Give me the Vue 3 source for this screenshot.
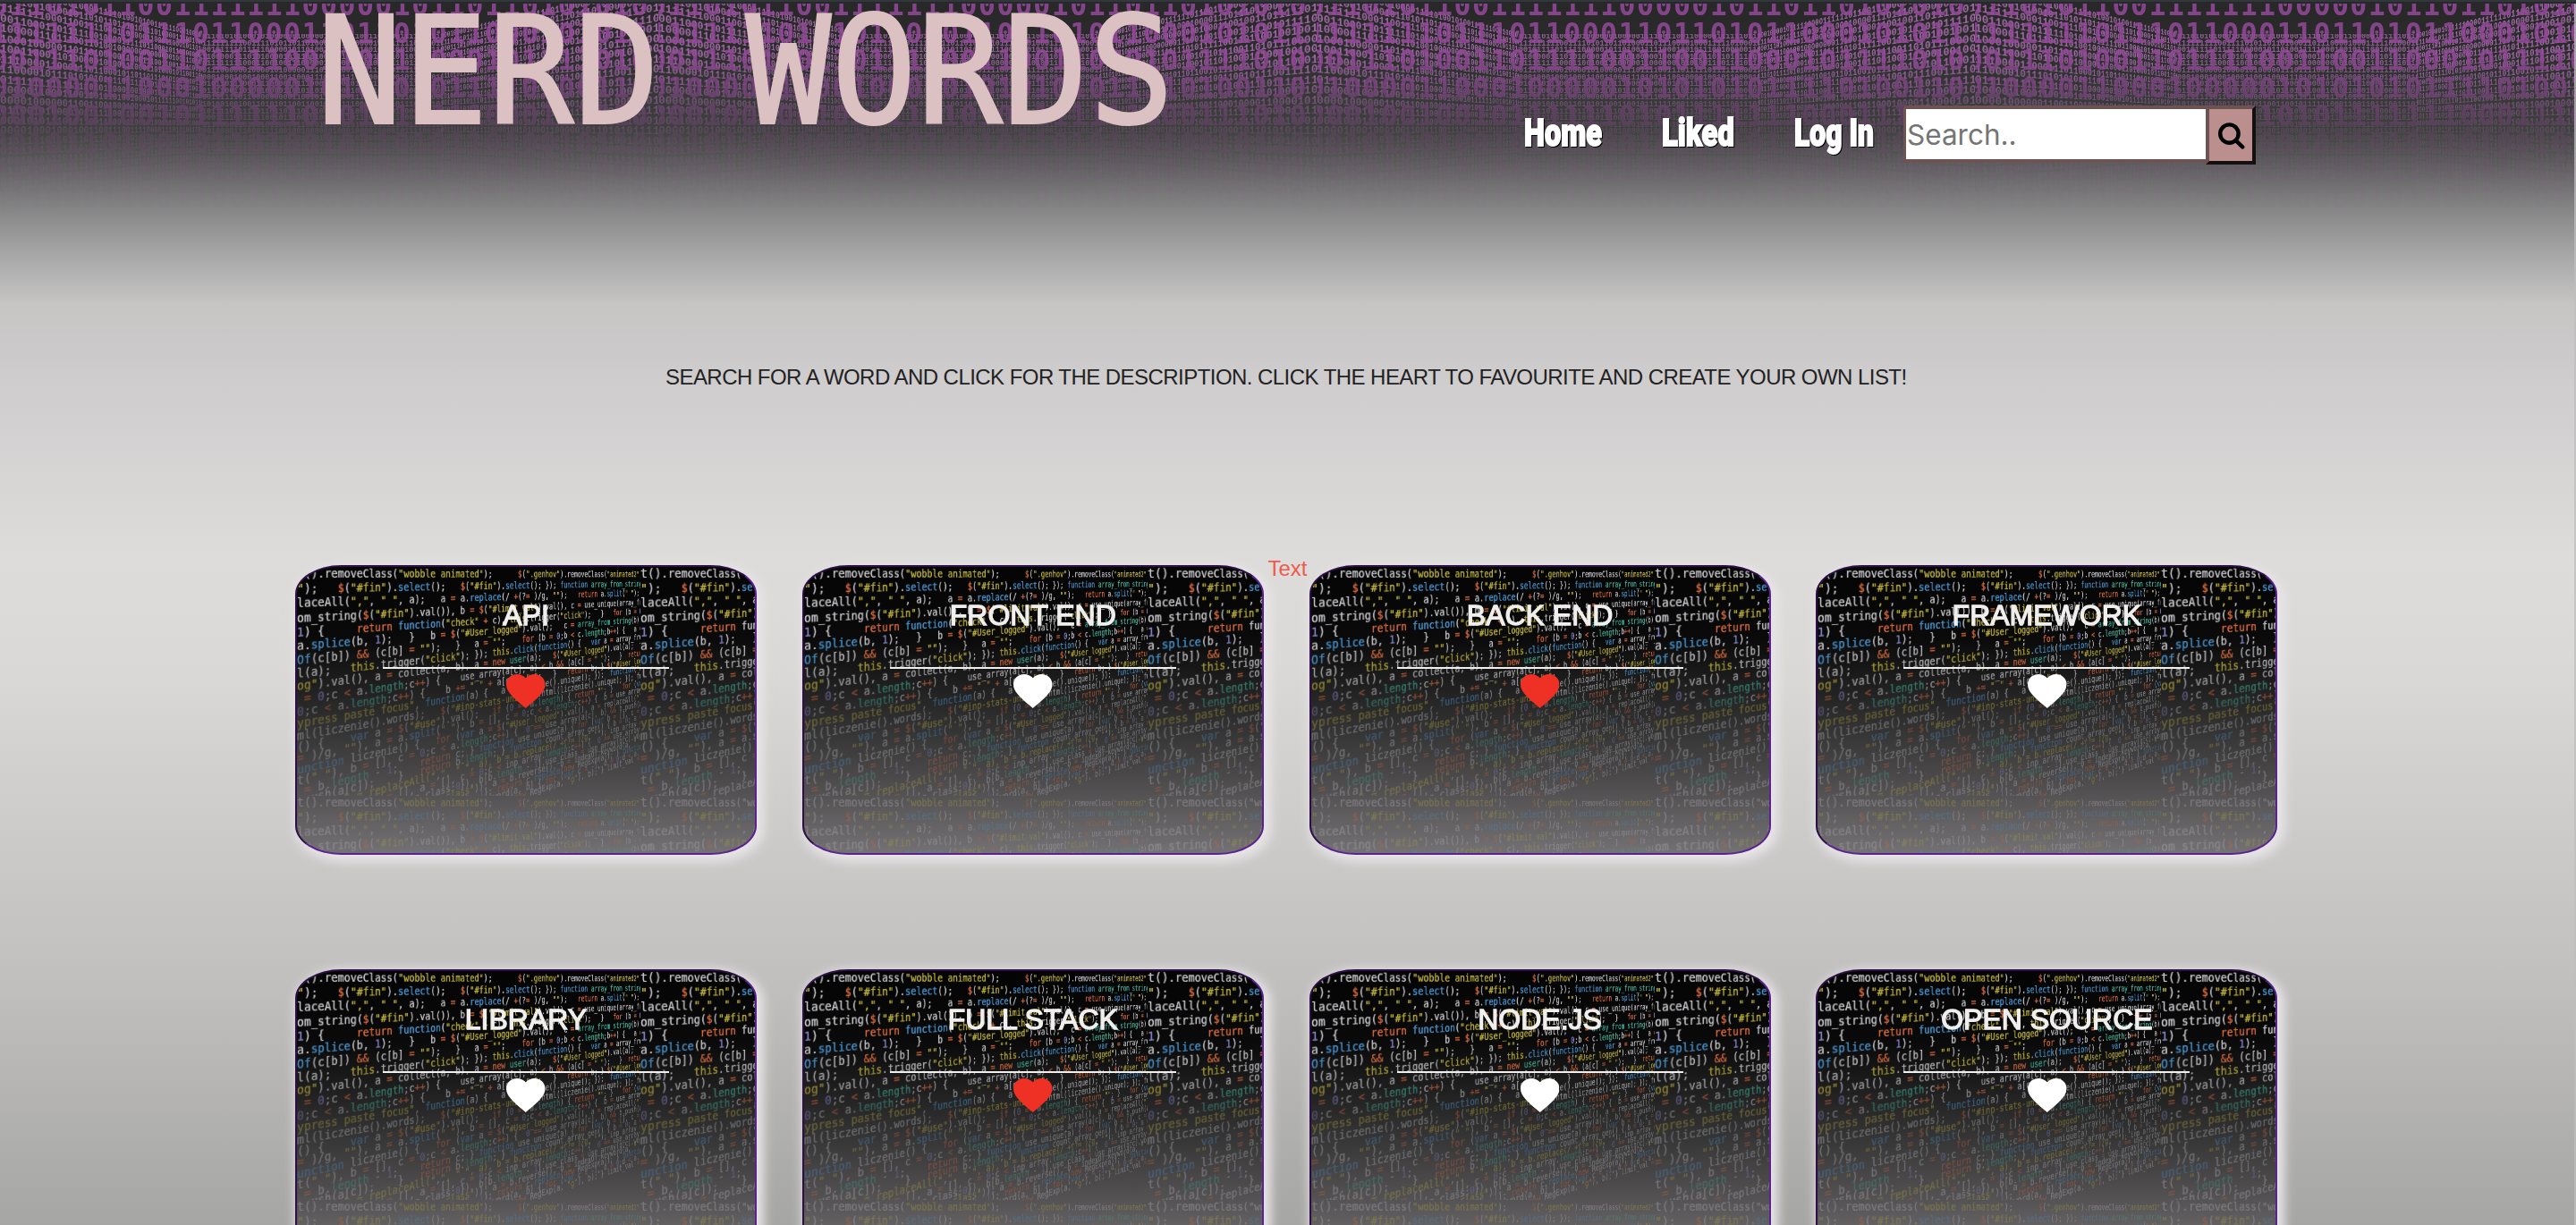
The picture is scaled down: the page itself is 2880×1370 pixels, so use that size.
<script setup>
const nav = [
  { label: 'Home', width: 89 },
  { label: 'Liked', width: 83 },
  { label: 'Log In', width: 91 },
]

const words = [
  { name: 'API', liked: true },
  { name: 'FRONT END', liked: false },
  { name: 'BACK END', liked: true },
  { name: 'FRAMEWORK', liked: false },
  { name: 'LIBRARY', liked: false },
  { name: 'FULL STACK', liked: true },
  { name: 'NODE.JS', liked: false },
  { name: 'OPEN SOURCE', liked: false },
]

/* Large binary digits of the banner, one string per row */
const bigRows = [
  '011010110011111110000010110110101010',
  '111111101110110001101101011000101011',
  '001110100110111100110011000101111010',
  '010000110001000001010101011110100110',
  '000100100101111110101111111000111010',
  '001011010010110100101101011010010110',
  '010011110100110011010001101001011001',
  '011010110011001110000010110110101010',
]

/* Small digits on the three walls of the banner */
let seed = 7
function bits(n) {
  let s = ''
  for (let i = 0; i < n; i++) {
    seed = (seed * 1103515245 + 12345) % 2147483648
    s += seed > 1073741824 ? '1' : '0'
  }
  return s
}
const wallRows = Array.from({ length: 23 }, () => ({
  left: bits(45),
  back: bits(54),
  right: bits(48),
}))

/* Code wallpaper of the cards */
const code = [
  't().removeClass("wobble animated");      $(".genhov").removeClass("animated2");',
  '");   $("#fin").select();   $("#fin").select(); }); function array_from_string(a)',
  'laceAll(",", " ", a);   a = a.replace(/ +(?= )/g, "");   return a.split(" "); }',
  'om_string($("#fin").val()), b = $("#limit_val").val(), c = use_unique(array_from_',
  '1) {     return function("check" + c), this.trigger("click");   }   for (b = 0;b ',
  'a.splice(b, 1);   }   b = $("#User_logged").val();   c = array_from_string(b);  fo',
  'Of(c[b]) && (c[b] = "");   }   a = "";    for (b = 0;b < c.length;b++) {   a == " "',
  'l(a);   this.trigger("click"); }); this.click(function() {   var a = array_from_st',
  'og").val(), a = collect(a, b), a = new user(a);   $("#User_logged").val(a);  functi',
  ' = 0;c < a.length;c++) {    use_array(a[c], a) < b && (a[c] = " ");   }  return a; }',
  '0;c < a.length;c++) {    b += " " + a[c] + " ";   }   return b; } $("#User_logged")',
  'ypress paste focus", function(a) {   a = liczenie().unique(); });  function("ALL: "',
  'ml(liczenie().words);   $("#inp-stats-unique").html(liczenie().unique); }); functio',
  '() {    var a = $("#use").val();   if (0 == a.length) { return ""; }   for (var a =',
  '= )/g, ""), a = a.split(" "), b = [], c = 0;c < a.length;c++) {  b = use_array(a[c])',
  'unction liczenie() {   for (var a = $("#User_logged").val(), a = replaceAll(" ", a),',
  't(" "), b = [], c = 0;c < a.length;c++) {  0 == use_array(a[c], b) && b.push(a[c]);',
  ' = b.length - 1;    return c; } function use_unique(a) { for (var b = [], c = 0;c <',
  '.push(a[c]);    }   return b.length; } function count_array_gen() { b = 0; a = b[c]',
  ' - "), b = replaceAll(",", " ", a), b = b.replace(/ +(?= )/g, ""); inp_array = b.sp',
  ')/gm, "(var b = [], a = [], c = 0;c < inp_array.length;c++) {  0 == use_array(inp)',
  '   inp_array[a], use_class:0}), b[b.length - 1].use_class = use_array(b[c].word); }',
  ' a.sort(dynamicSort("use_class")); a = b.reverse(), b = indexOf_keyword(a, " ");  -1',
  ' void 0); -1 < b && a.splice(b, 1); return c.replace(new RegExp(a)); } function dyn',
  '   return a; } function indexOf_keyword(a, b) { for (var c = -1, d = 0;d < a.length',
  ' replaceAll(a, b, c) { return c.replace(new RegExp(a, "g"), b); } limit_val = parse',
]
const TOKENS =
  /("[^"]*"|\bthis\b)|(\$|&&|\+\+|[=<+]|\breturn\b|\bnew\b|\bif\b|\bfor\b)|(\bfunction\b|\bunction\b|\bvar\b|\bselect\b|\bsplice\b|\bsplit\b|\breplace\b|\bclick\b|\bOf\b)|(\blength\b|\buser\b|\barray_from_string\b)|(\b\d\b)/g
const KINDS = ['', 'y', 'o', 'b', 't', 'n']
function tokenize(line) {
  /* a row may open in the middle of a string: its first quote closes it */
  const out = []
  let last = 0
  const lead = line.match(/^(og|ypress paste focus)?"(?=[),])/)
  if (lead) {
    out.push({ k: 'y', s: lead[0] })
    last = lead[0].length
  }
  const rest = line.slice(last)
  last = 0
  for (const m of rest.matchAll(TOKENS)) {
    if (m.index > last) out.push({ k: 'p', s: rest.slice(last, m.index) })
    out.push({ k: KINDS[[1, 2, 3, 4, 5].find((g) => m[g] !== undefined)], s: m[0] })
    last = m.index + m[0].length
  }
  out.push({ k: 'p', s: rest.slice(last) })
  return out
}
function sheet(rows, cols) {
  return code.slice(0, rows).map((line, k) => ({
    tokens: tokenize(line.slice(0, cols)),
    pitch: Math.max(10, 16.9 - 0.32 * k),
  }))
}
const tiles = [sheet(26, 90), sheet(20, 22), sheet(8, 90), sheet(6, 22)]
</script>

<template>
  <div class="page">
    <div class="banner" aria-hidden="true">
      <div v-for="t in 4" :key="t" class="bin-tile">
        <div class="wall wall-back">
          <div v-for="(r, i) in wallRows.slice(1)" :key="i">{{ r.back }}</div>
        </div>
        <div class="wall wall-left">
          <div v-for="(r, i) in wallRows" :key="i">{{ r.left }}</div>
        </div>
        <div class="wall wall-right">
          <div v-for="(r, i) in wallRows" :key="i">{{ r.right }}</div>
        </div>
        <div class="big">
          <div v-for="(r, i) in bigRows" :key="i">{{ r }}</div>
        </div>
      </div>
    </div>
    <div class="edge-right"></div>

    <header class="top">
      <h1 class="logo">NERD WORDS</h1>
      <nav class="nav">
        <a v-for="n in nav" :key="n.label" class="nav-link">
          <svg :width="n.width" height="44" :viewBox="`0 0 ${n.width} 44`">
            <text x="0" y="33" :textLength="n.width - 2" lengthAdjust="spacingAndGlyphs">{{ n.label }}</text>
          </svg>
        </a>
      </nav>
      <form class="search">
        <div class="field">Search..</div>
        <div class="go">
          <svg width="30" height="30" viewBox="0 0 30 30" fill="none" stroke="#000" stroke-width="4.4">
            <circle cx="12.4" cy="12.6" r="10.2" />
            <path d="M20 20.4 27.2 27.4" stroke-linecap="round" />
          </svg>
        </div>
      </form>
    </header>

    <p class="intro">SEARCH FOR A WORD AND CLICK FOR THE DESCRIPTION. CLICK THE HEART TO FAVOURITE AND CREATE YOUR OWN LIST!</p>

    <main class="grid">
      <article v-for="w in words" :key="w.name" class="card">
        <div class="wallpaper" aria-hidden="true">
          <div v-for="(tile, i) in tiles" :key="i" class="code-tile">
            <div class="code-plane">
              <div v-for="(l, j) in tile" :key="j" class="code-line" :style="{ height: l.pitch + 'px' }"><span v-for="(t, m) in l.tokens" :key="m" :class="t.k">{{ t.s }}</span></div>
            </div>
          </div>
        </div>
        <div class="body">
          <h2>{{ w.name }}</h2>
          <hr />
          <svg class="heart" :class="{ liked: w.liked }" viewBox="2 3 20 18.35" preserveAspectRatio="none">
            <path d="M12 21.35l-1.45-1.32C5.4 15.36 2 12.28 2 8.5 2 5.42 4.42 3 7.5 3c1.74 0 3.41.81 4.5 2.09C13.09 3.81 14.76 3 16.5 3 19.58 3 22 5.42 22 8.5c0 3.78-3.4 6.86-8.55 11.54L12 21.35z" />
          </svg>
        </div>
      </article>
      <span class="note">Text</span>
    </main>
  </div>
</template>

<style>
html,
body {
  margin: 0;
  overflow: hidden;
}
</style>

<style scoped>
.page {
  position: relative;
  width: 2880px;
  height: 1370px;
  overflow: hidden;
  font-family: "Liberation Sans", Arial, sans-serif;
  background: linear-gradient(
    180deg,
    #33363a 0,
    #33363a 2px,
    #26292a 2px,
    #26292a 4px,
    #282828 4px,
    #2b2b2b 50px,
    #363637 100px,
    #414041 145px,
    #5a595a 180px,
    #747374 210px,
    #8a8a8a 240px,
    #a5a4a5 280px,
    #c6c5c4 340px,
    #cfcdce 430px,
    #dddcda 620px,
    #dad9d7 740px,
    #cac9c8 960px,
    #c2c1c0 1080px,
    #a6a6a4 1370px
  );
}
.edge-right {
  position: absolute;
  z-index: 2;
  right: 0;
  top: 4px;
  width: 2px;
  height: 1366px;
  background: rgba(190, 190, 190, 0.75);
}

/* banner wallpaper */
.banner {
  position: absolute;
  left: 0;
  top: 4px;
  width: 2880px;
  height: 236px;
  display: flex;
  overflow: hidden;
  -webkit-mask-image: linear-gradient(#000 0, #000 55px, rgba(0, 0, 0, 0.72) 88px, rgba(0, 0, 0, 0.38) 125px, rgba(0, 0, 0, 0.18) 150px, rgba(0, 0, 0, 0.12) 185px, transparent 236px);
  mask-image: linear-gradient(#000 0, #000 55px, rgba(0, 0, 0, 0.72) 88px, rgba(0, 0, 0, 0.38) 125px, rgba(0, 0, 0, 0.18) 150px, rgba(0, 0, 0, 0.12) 185px, transparent 236px);
}
.bin-tile {
  position: relative;
  flex: none;
  width: 736px;
  height: 236px;
  overflow: hidden;
}
.wall {
  position: absolute;
  font-family: "Liberation Mono", monospace;
  font-weight: 700;
  white-space: pre;
  color: rgba(178, 116, 184, 0.88);
}
.wall-left,
.wall-right {
  top: -24px;
  width: 346px;
  font-size: 13px;
  line-height: 11.5px;
  overflow: hidden;
}
.wall-left {
  left: 0;
  transform-origin: 0 163px;
  transform: matrix3d(1, 0, 0, 0.001532, 0, 1, 0, 0, 0, 0, 1, 0, 0, 0, 0, 1);
}
.wall-right {
  right: 0;
  width: 372px;
  text-indent: -1px;
  transform-origin: 372px 163px;
  transform: matrix3d(1, 0, 0, -0.001436, 0, 1, 0, 0, 0, 0, 1, 0, 0, 0, 0, 1);
}
.wall-back {
  left: 226px;
  top: 34px;
  width: 269px;
  overflow: hidden;
  font-size: 8.4px;
  line-height: 7.6px;
  opacity: 0.85;
}
.big {
  position: absolute;
  left: -10px;
  top: -13px;
  font-family: "DejaVu Sans Mono", monospace;
  font-weight: 700;
  font-size: 31.5px;
  line-height: 30.7px;
  letter-spacing: 1.48px;
  white-space: pre;
  color: rgba(150, 74, 156, 0.84);
}

/* header */
.top {
  position: relative;
  z-index: 1;
  height: 240px;
  display: flex;
  align-items: flex-start;
}
.logo {
  margin: -18px 0 0 354px;
  width: 1350px;
  flex: none;
  font-family: "DejaVu Sans Mono", monospace;
  font-weight: 400;
  font-size: 168px;
  line-height: 196px;
  color: #dcc1c2;
  -webkit-text-stroke: 2px #dcc1c2;
  white-space: pre;
  transform: scaleX(0.948);
  transform-origin: 0 0;
}
.nav {
  display: flex;
  gap: 65px;
  padding-top: 130px;
}
.nav-link {
  display: block;
  height: 44px;
}
.nav-link svg {
  display: block;
  overflow: visible;
}
.nav-link text {
  font-family: Roboto, sans-serif;
  font-weight: 900;
  font-size: 42px;
  fill: #fff;
  stroke: #fff;
  stroke-width: 1.8;
  filter: drop-shadow(1px 1px 0 #000);
}
.search {
  display: flex;
  align-items: flex-start;
  padding: 118px 0 0 31px;
}
.field {
  box-sizing: border-box;
  width: 342px;
  height: 64px;
  padding-left: 1px;
  border: 4px solid #6e5353;
  border-width: 4px 4px 4px 3px;
  border-radius: 4px;
  background: #fff;
  color: #757575;
  font-family: Inter, sans-serif;
  font-size: 31.5px;
  line-height: 57px;
}
.go {
  box-sizing: border-box;
  width: 56px;
  height: 66px;
  margin-left: -4px;
  padding: 15px 0 0 10px;
  border: 4px solid;
  border-color: #6e5353 #151010 #151010 #6e5353;
  background: #bc8f8f;
}
.go svg {
  display: block;
}

.intro {
  margin: 168px 0 0 744px;
  width: 1400px;
  height: 28px;
  font-size: 24px;
  line-height: 28px;
  letter-spacing: -0.55px;
  white-space: nowrap;
  color: #222;
}

/* cards */
.grid {
  position: relative;
  display: grid;
  grid-template-columns: repeat(4, 516px);
  column-gap: 50.8px;
  row-gap: 128px;
  margin: 196px 0 0 330px;
  width: 2216.4px;
}
.note {
  position: absolute;
  left: 1087.5px;
  top: -10px;
  font-size: 24px;
  line-height: 28px;
  color: #ee5a4c;
}
.card {
  position: relative;
  box-sizing: border-box;
  height: 324px;
  border: 2px solid;
  border-color: #2e0f47 #5a2390 #5a2390 #2e0f47;
  border-radius: 10%;
  overflow: hidden;
  background: linear-gradient(#040404 0, #0a0a0a 80px, #232222 140px, #383738 190px, #4d4b4c 240px, #737173 320px);
  box-shadow: 4px 4px 12px 4px #e9e5e8;
}
.wallpaper {
  position: absolute;
  left: 0;
  top: 0;
  width: 768px;
  height: 320px;
  display: flex;
  flex-wrap: wrap;
  align-content: flex-start;
  -webkit-mask-image: linear-gradient(#000 0, #000 75px, rgba(0, 0, 0, 0.75) 120px, rgba(0, 0, 0, 0.36) 160px, rgba(0, 0, 0, 0.28) 320px);
  mask-image: linear-gradient(#000 0, #000 75px, rgba(0, 0, 0, 0.75) 120px, rgba(0, 0, 0, 0.36) 160px, rgba(0, 0, 0, 0.28) 320px);
}
.code-tile {
  flex: none;
  width: 384px;
  height: 256px;
  overflow: hidden;
}
.code-plane {
  width: 640px;
  font-family: "DejaVu Sans Mono", monospace;
  font-size: 13.2px;
  color: #c2c2c6;
  text-shadow: 0 0 1px currentColor;
  transform-origin: 0 10px;
  transform: matrix3d(1, 0, 0, 0.000977, 0, 1, 0, 0, 0, 0, 1, 0, 0, 0, 0, 1);
}
.code-line {
  white-space: pre;
  line-height: 15px;
}
.y {
  color: #b9ad40;
}
.o {
  color: #d0683e;
}
.b {
  color: #4a92ca;
}
.t {
  color: #3fa890;
}
.n {
  color: #8080c0;
}
.body {
  position: relative;
  display: flex;
  flex-direction: column;
  align-items: center;
}
.body h2 {
  margin: 35px 0 0;
  font-size: 32px;
  line-height: 38px;
  font-weight: 400;
  color: #f0efee;
  -webkit-text-stroke: 1.3px #f0efee;
  white-space: nowrap;
}
.body hr {
  width: 320px;
  height: 2px;
  margin: 39px 0 0;
  border: 0;
  background: #f0efee;
}
.heart {
  display: block;
  width: 43.5px;
  height: 38px;
  margin-top: 5.5px;
  fill: #fff;
}
.heart.liked {
  fill: #ee3124;
}
</style>
